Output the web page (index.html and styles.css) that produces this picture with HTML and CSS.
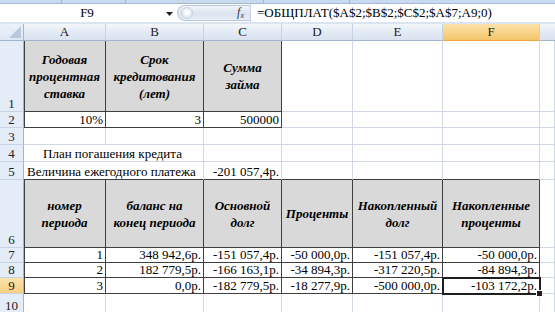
FILE: index.html
```html
<!DOCTYPE html>
<html lang="ru">
<head>
<meta charset="utf-8">
<title>Excel</title>
<link rel="stylesheet" href="styles.css">
</head>
<body>
<div class="app">
  <div class="ribbon-edge">
    <span class="seg s1"></span><span class="seg s2"></span><span class="seg s3"></span><span class="seg s4"></span>
  </div>
  <div class="formula-bar">
    <div class="namebox">F9</div>
    <div class="nb-arrow"><svg width="7" height="4" viewBox="0 0 7 4"><path d="M0 0h7L3.5 4z" fill="#222"/></svg></div>
    <div class="fx-pill">
      <span class="fx-circle"></span>
      <span class="fx">f<sub>x</sub></span>
    </div>
    <div class="formula">=ОБЩПЛАТ($A$2;$B$2;$C$2;$A$7;A9;0)</div>
  </div>
  <div class="sheet">
    <div class="corner"><svg width="12" height="12" viewBox="0 0 12 12"><path d="M12 0V12H0z" fill="#b7c8de"/></svg></div>
    <div class="ch">A</div>
    <div class="ch">B</div>
    <div class="ch">C</div>
    <div class="ch">D</div>
    <div class="ch">E</div>
    <div class="ch sel">F</div>
    <div class="ch last"></div>

    <div class="rh">1</div>
    <div class="c g bd bl hd">Годовая процентная ставка</div>
    <div class="c g bd hd">Срок кредитования (лет)</div>
    <div class="c g bd hd">Сумма займа</div>
    <div class="c"></div>
    <div class="c"></div>
    <div class="c"></div>
    <div class="c"></div>

    <div class="rh">2</div>
    <div class="c bd bl num">10%</div>
    <div class="c bd num">3</div>
    <div class="c bd num">500000</div>
    <div class="c"></div>
    <div class="c"></div>
    <div class="c"></div>
    <div class="c"></div>

    <div class="rh">3</div>
    <div class="c"></div>
    <div class="c"></div>
    <div class="c"></div>
    <div class="c"></div>
    <div class="c"></div>
    <div class="c"></div>
    <div class="c"></div>

    <div class="rh">4</div>
    <div class="c span2 title">План погашения кредита</div>
    <div class="c"></div>
    <div class="c"></div>
    <div class="c"></div>
    <div class="c"></div>
    <div class="c"></div>

    <div class="rh">5</div>
    <div class="c bb span2 txt">Величина ежегодного платежа</div>
    <div class="c bb num">-201 057,4р.</div>
    <div class="c bb"></div>
    <div class="c bb"></div>
    <div class="c bb"></div>
    <div class="c"></div>

    <div class="rh">6</div>
    <div class="c g bd bl hd">номер периода</div>
    <div class="c g bd hd">баланс на конец периода</div>
    <div class="c g bd hd">Основной долг</div>
    <div class="c g bd hd">Проценты</div>
    <div class="c g bd hd">Накопленный долг</div>
    <div class="c g bd hd">Накопленные проценты</div>
    <div class="c"></div>

    <div class="rh">7</div>
    <div class="c bd bl num">1</div>
    <div class="c bd num">348 942,6р.</div>
    <div class="c bd num">-151 057,4р.</div>
    <div class="c bd num">-50 000,0р.</div>
    <div class="c bd num">-151 057,4р.</div>
    <div class="c bd num">-50 000,0р.</div>
    <div class="c"></div>

    <div class="rh">8</div>
    <div class="c bd bl num">2</div>
    <div class="c bd num">182 779,5р.</div>
    <div class="c bd num">-166 163,1р.</div>
    <div class="c bd num">-34 894,3р.</div>
    <div class="c bd num">-317 220,5р.</div>
    <div class="c bd num">-84 894,3р.</div>
    <div class="c"></div>

    <div class="rh sel">9</div>
    <div class="c bd bl num">3</div>
    <div class="c bd num">0,0р.</div>
    <div class="c bd num">-182 779,5р.</div>
    <div class="c bd num">-18 277,9р.</div>
    <div class="c bd num">-500 000,0р.</div>
    <div class="c bd num active">-103 172,2р.</div>
    <div class="c"></div>

    <div class="rh">10</div>
    <div class="c"></div>
    <div class="c"></div>
    <div class="c"></div>
    <div class="c"></div>
    <div class="c"></div>
    <div class="c"></div>
    <div class="c"></div>
  </div>
</div>
</body>
</html>
```

FILE: styles.css
```css
* { box-sizing: border-box; }
html, body { margin: 0; padding: 0; background: #fff; }
body {
  width: 555px;
  height: 312px;
  overflow: hidden;
  font-family: "Liberation Serif", "Times New Roman", serif;
  font-size: 13px;
  color: #000;
}
.app { display: flex; flex-direction: column; width: 555px; height: 312px; overflow: hidden; }

.ribbon-edge {
  height: 3px;
  background: #c9d9ee;
  display: flex;
}
.ribbon-edge .seg { height: 3px; border-right: 1px solid #9fb5d1; }
.ribbon-edge .s1 { width: 62px; }
.ribbon-edge .s2 { width: 64px; }
.ribbon-edge .s3 { width: 138px; }
.ribbon-edge .s4 { width: 86px; }

.formula-bar {
  height: 23px;
  display: flex;
  align-items: stretch;
  background: #fff;
  border-top: 1px solid #a5b9d4;
  border-bottom: 2px solid #dbe5f1;
}
.namebox {
  width: 166px;
  display: flex;
  align-items: center;
  justify-content: center;
  padding-left: 8px;
  font-size: 13px;
}
.nb-arrow {
  width: 11px;
  display: flex;
  align-items: center;
  justify-content: flex-start;
  padding-top: 1px;
}
.fx-pill {
  width: 73px;
  margin: 1px 0;
  border-radius: 10px 0 0 10px;
  background: linear-gradient(#f2f5f9, #dbe3ee 55%, #e8eef6);
  border: 1px solid #b9c8db;
  border-right: none;
  display: flex;
  align-items: center;
  justify-content: space-between;
  padding: 0 6px 0 3px;
}
.fx-circle {
  width: 12px;
  height: 12px;
  border-radius: 50%;
  background: radial-gradient(circle at 50% 45%, #fff 20%, #e6ebf2 60%, #c6d2e2);
  border: 1px solid #c9d4e3;
}
.fx {
  font-style: italic;
  font-size: 12px;
  color: #2b3a4e;
  line-height: 1;
}
.fx sub { font-size: 8px; vertical-align: -2px; }
.formula {
  flex: 1;
  display: flex;
  align-items: center;
  padding-left: 6px;
  font-size: 13px;
  white-space: nowrap;
  border-left: 1px solid #c5d3e6;
}

.sheet {
  display: grid;
  grid-template-columns: 24px 82px 98px 78px 71px 90px 97px 1fr;
  grid-template-rows: 17px 71px 16px 17px 17px 18px 68px 15px 15px 16px 20px;
}

.corner {
  background: linear-gradient(#edf2f9, #dde7f4);
  border-right: 1px solid #9eb6ce;
  border-bottom: 1px solid #9eb6ce;
  display: flex;
  align-items: flex-end;
  justify-content: flex-end;
  padding: 0 2px 2px 0;
}
.ch {
  background: linear-gradient(#f4f7fb, #e3eaf4 50%, #d9e3f0);
  border-right: 1px solid #c5d3e4;
  border-bottom: 1px solid #9eb6ce;
  display: flex;
  align-items: center;
  justify-content: center;
  color: #222;
}
.ch.sel {
  background: linear-gradient(#fbe3ac, #f9d58a 50%, #f4c36b);
  border-bottom: 1px solid #f2a541;
}
.ch.last { border-right: none; }

.rh {
  background: #e4ecf7;
  border-right: 1px solid #9eb6ce;
  border-bottom: 1px solid #c5d3e4;
  display: flex;
  align-items: flex-end;
  justify-content: center;
  color: #222;
  line-height: 14px;
}
.rh.sel {
  background: linear-gradient(#fbe3ac, #f7cf83);
  border-right: 1px solid #f2a541;
}

.c {
  border-right: 1px solid #d0d7e5;
  border-bottom: 1px solid #d0d7e5;
  background: #fff;
  white-space: nowrap;
  line-height: 14px;
  position: relative;
}
.g { background: #d9d9d9; }
.bd { border-right-color: #3f3f3f; border-bottom-color: #3f3f3f; }
.bb { border-bottom-color: #3f3f3f; }
.bl { box-shadow: inset 1px 0 #3f3f3f; }

.span2 { grid-column: span 2; }

.hd {
  display: flex;
  align-items: center;
  justify-content: center;
  text-align: center;
  white-space: normal;
  font-weight: bold;
  font-style: italic;
  line-height: 17px;
  padding: 0 3px;
}
.num {
  display: flex;
  align-items: flex-end;
  justify-content: flex-end;
  padding: 0 2px;
}
.title {
  display: flex;
  align-items: flex-end;
  padding-left: 19px;
}
.txt {
  display: flex;
  align-items: flex-end;
  padding-left: 3px;
}

.active {
  outline: 2px solid #1e1e1e;
  outline-offset: -1px;
  z-index: 2;
}
.active::after {
  content: "";
  position: absolute;
  right: -4px;
  bottom: -4px;
  width: 5px;
  height: 5px;
  background: #1e1e1e;
  border: 1px solid #fff;
}
```
